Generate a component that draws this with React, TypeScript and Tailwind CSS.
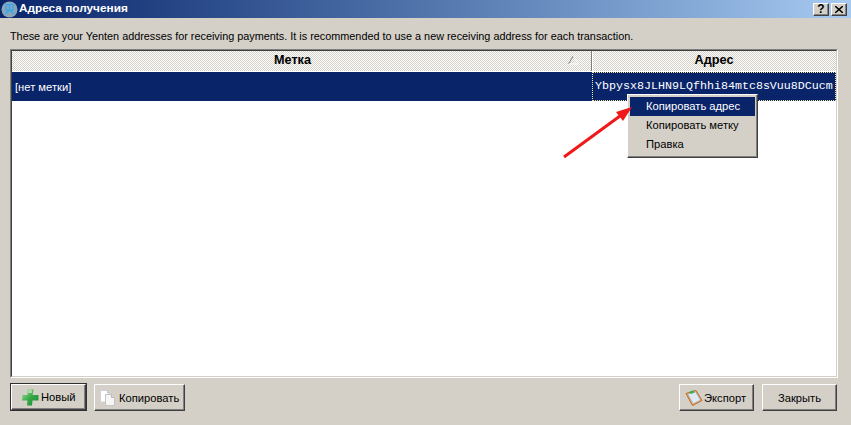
const uiFont = { fontFamily: '"Liberation Sans", sans-serif' };

const Bevel = "border border-t-white border-l-white border-r-[#404040] border-b-[#404040] shadow-[inset_-1px_-1px_0_#808080]";
const Dither = "bg-[repeating-conic-gradient(#d4d0c8_0_25%,#fff_0_50%)] bg-[length:2px_2px]";

const PlusIcon = () => (
  <svg width="17" height="17" viewBox="0 0 17 17">
    <defs>
      <linearGradient id="plusGrad" x1="0" y1="0" x2="1" y2="1">
        <stop offset="0" stopColor="#a8e0a0" />
        <stop offset="0.5" stopColor="#38a848" />
        <stop offset="1" stopColor="#148a34" />
      </linearGradient>
    </defs>
    <path d="M5.5 0.5h6l-1 5.5h6v5.5h-6l-.5 5h-5l.5-5H0l.5-5.5h5z" fill="url(#plusGrad)" />
    <path d="M6 1h4v3H6z" fill="#c0ecc0" opacity="0.7" />
  </svg>
);

const CopyIcon = () => (
  <svg width="16" height="16" viewBox="0 0 16 16">
    <path d="M0.5 0.5h7l2.5 2.5v9H0.5z" fill="#fff" stroke="#d0d0d8" />
    <path d="M7.5 0.5V3H10" fill="#e0e0e8" stroke="#c0c0c8" />
    <path d="M5.5 4.5h6l3 3v8h-9z" fill="#f6f6f6" stroke="#c4c4c4" />
    <path d="M11.5 4.5v3h3" fill="#dcdce0" stroke="#b8b8b8" />
  </svg>
);

const ExportIcon = () => (
  <svg width="18" height="16" viewBox="0 0 18 16">
    <path d="M1 3.5l10-3 6 10-9.5 5z" fill="#f0a860" stroke="#b86a28" />
    <path d="M3 4l7.5-2.2 4.8 8.2-7.3 3.8z" fill="#dceaf6" stroke="#90a8c0" strokeWidth="0.5" />
    <path d="M4.5 1.5l4-1.2 1 2.4-4 1.2z" fill="#3fb04a" />
  </svg>
);

export default function App() {
  return (
    <div className="relative flex h-[425px] w-[851px] flex-col overflow-hidden bg-[#d4d0c8] text-[11.2px] text-black" style={uiFont}>
      {/* title bar */}
      <div className="flex h-[18px] items-center justify-between bg-gradient-to-r from-[#0a246a] to-[#a6caf0] pr-[4px]">
        <div className="flex items-center gap-[1px] pl-[1px]">
          <svg width="17" height="17" viewBox="0 0 17 17">
            <circle cx="8.5" cy="8.5" r="8" fill="#8ca4b8" />
            <path d="M5 3.5h7v5.5H5zM8.5 3.5V9M4 13l4.5-4 4.5 4" fill="none" stroke="#38a8e8" strokeWidth="1.5" />
          </svg>
          <span className="text-[11.8px] font-bold text-white">Адреса получения</span>
        </div>
        <div className="flex gap-[2px]">
          <button className={`flex h-[13px] w-[16px] items-center justify-center bg-[#d4d0c8] text-[12px] font-bold leading-none ${Bevel}`}>?</button>
          <button className={`flex h-[13px] w-[16px] items-center justify-center bg-[#d4d0c8] ${Bevel}`}>
            <svg width="8" height="7" viewBox="0 0 8 7">
              <path d="M0 0l8 7M8 0L0 7" stroke="#000" strokeWidth="1.5" />
            </svg>
          </button>
        </div>
      </div>

      {/* hint */}
      <p className="pl-[10px] pt-[12px] text-[10.85px] leading-[13px]">
        These are your Yenten addresses for receiving payments. It is recommended to use a new receiving address for each transaction.
      </p>

      {/* table */}
      <div className="ml-[10px] mr-[13px] mt-[6px] h-[329px] border border-b-white border-l-[#808080] border-r-white border-t-[#808080]">
        <div className="flex h-full flex-col border border-b-[#d4d0c8] border-l-[#404040] border-r-[#d4d0c8] border-t-[#404040] bg-white">
          <div className="flex h-[20px] text-[12.7px] font-bold">
            <div className={`relative flex flex-1 items-center justify-center pr-[18px] ${Dither} border-r border-r-[#808080] shadow-[1px_0_0_#fff]`}>
              <span>Метка</span>
              <svg className="absolute right-[12px] top-[4px]" width="12" height="10" viewBox="0 0 12 10">
                <path d="M6.5 0.5L1.5 9" stroke="#808080" fill="none" />
                <path d="M6.5 0.5l5 8.5H1.5" stroke="#fff" fill="none" />
              </svg>
            </div>
            <div className={`flex w-[244px] items-center justify-center ${Dither}`}>
              <span>Адрес</span>
            </div>
          </div>
          <div className="flex h-[31px] border-y border-y-white bg-[#0a246a] text-white">
            <div className="flex flex-1 items-center pl-[3px] pt-[1px]">[нет метки]</div>
            <div className="flex w-[244px] items-center border border-dotted border-[#f0e8a0] pl-[2px] pt-[1px] text-[11.67px]" style={{ fontFamily: '"Liberation Mono", monospace' }}>
              Ybpysx8JLHN9LQfhhi84mtc8sVuu8DCucm
            </div>
          </div>
        </div>
      </div>

      {/* buttons */}
      <div className="mt-[6px] flex items-start pl-[10px] pr-[14px]">
        <button className="-mt-[1px] h-[28px] w-[77px] border border-[#303030]">
          <div className={`flex h-full items-center pl-[10px] pt-[1px] ${Bevel}`}>
            <PlusIcon />
            <span className="ml-[2px]">Новый</span>
          </div>
        </button>
        <button className={`ml-[7px] flex h-[27px] w-[91px] items-center pl-[5px] pt-[1px] ${Bevel}`}>
          <CopyIcon />
          <span className="ml-[3px]">Копировать</span>
        </button>
        <div className="flex-1" />
        <button className={`flex h-[27px] w-[75px] items-center pl-[5px] pt-[1px] ${Bevel}`}>
          <ExportIcon />
          <span className="ml-[1px]">Экспорт</span>
        </button>
        <button className={`ml-[8px] flex h-[27px] w-[75px] items-center justify-center pt-[1px] ${Bevel}`}>Закрыть</button>
      </div>

      {/* context menu */}
      <div className={`absolute left-[627px] top-[94px] w-[131px] bg-[#d4d0c8] px-[2px] pb-[3px] pt-[2px] ${Bevel}`}>
        <div className="flex h-[19px] items-center bg-[#0a246a] pl-[16px] text-white">Копировать адрес</div>
        <div className="flex h-[19px] items-center pl-[16px]">Копировать метку</div>
        <div className="flex h-[19px] items-center pl-[16px]">Правка</div>
      </div>

      {/* annotation arrow */}
      <svg className="absolute left-[560px] top-[100px]" width="74" height="60" viewBox="0 0 74 60">
        <path d="M4 57L60 16" stroke="#f01818" strokeWidth="3" />
        <path d="M72 7L56 12l7 9z" fill="#f01818" />
      </svg>
    </div>
  );
}
